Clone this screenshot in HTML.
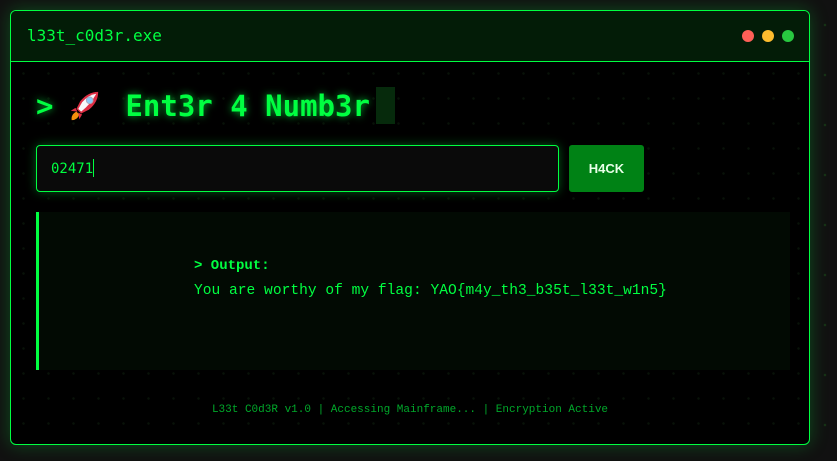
<!DOCTYPE html>
<html><head><meta charset="utf-8"><style>
*{margin:0;padding:0;box-sizing:border-box}
html,body{width:837px;height:461px;overflow:hidden}
body{background:#111 radial-gradient(circle,#163016 1.1px,transparent 1.5px) 0 0/50px 50px;font-family:"DejaVu Sans Mono","Liberation Mono",monospace;position:relative}
.win{position:absolute;left:10px;top:10px;width:800px;height:435px;border:1px solid #00ff41;border-radius:6px;background:#000 radial-gradient(circle,#081208 1px,transparent 1.5px) 0 0/25px 25px;box-shadow:0 0 18px rgba(0,255,65,.25);overflow:hidden}
.hdr{height:51px;background:#031c07;border-bottom:1.5px solid #00ff41;position:relative}
.hdr .t{position:absolute;left:16px;top:15px;color:#00ff41;font-size:16px}
.dots{position:absolute;right:15px;top:19px;display:flex;gap:8px}
.dots i{width:12px;height:12px;border-radius:50%;display:block}
h1{position:absolute;left:25px;top:76px;font-size:29px;font-weight:bold;color:#00ff41;text-shadow:0 0 8px rgba(0,255,65,.7);white-space:pre;display:flex;align-items:center}
.cur{display:inline-block;width:19px;height:37px;background:#062a0c;margin-left:6px}
.inp{position:absolute;left:25px;top:134px;width:523px;height:47px;border:1px solid #00ff41;border-radius:4px;background:#0a0a0a;box-shadow:0 0 10px rgba(0,255,65,.35);color:#00ff41;font-size:14px;padding:13px 0 0 14px}
.inp span{display:inline-block;width:1px;height:18px;background:#00ff41;vertical-align:-4px}
.btn{position:absolute;left:558px;top:134px;width:75px;height:47px;background:#008215;border-radius:3px;color:#e8ffe8;font-family:"Liberation Sans",sans-serif;font-weight:bold;font-size:13px;text-align:center;line-height:47px}
.out{position:absolute;left:25px;top:201px;width:754px;height:158px;background:#020a03;border-left:3px solid #00ff41}
.out .l{position:absolute;left:155px;top:46px;color:#00ff41;font-size:14px;font-weight:bold;font-family:"Liberation Mono",monospace}
.out .m{position:absolute;left:155px;top:71px;color:#00ff41;font-size:14.6px;font-family:"Liberation Mono",monospace;white-space:pre}
.ft{position:absolute;left:0;width:100%;top:393px;text-align:center;color:#00a82a;font-size:11px;font-family:"Liberation Mono",monospace;white-space:pre}
</style></head><body>
<div class="win">
<div class="hdr"><div class="t">l33t_c0d3r.exe</div>
<div class="dots"><i style="background:#ff5f57"></i><i style="background:#febc2e"></i><i style="background:#28c840"></i></div></div>
<h1>&gt;<svg width="34" height="34" viewBox="0 0 36 36" style="margin:0 24px 0 14px"><path d="M10 24 Q4 27 5 33 Q11 33 13 27Z" fill="#f4900c"/><path d="M9 20 L4 23 L11 24Z M16 27 L13 32 L12 25Z" fill="#dd2e44"/><path d="M33 3 Q22 3 14 13 L10 21 L15 26 L23 22 Q33 14 33 3Z" fill="#dd2e44"/><path d="M31 5 Q23 6 16 14 L12 21 L15 24 Q25 16 31 5Z" fill="#f5f8fa"/><circle cx="24" cy="12" r="3.5" fill="#88c9f9" stroke="#aab" stroke-width="1"/></svg>Ent3r 4 Numb3r<span class="cur"></span></h1>
<div class="inp">02471<span></span></div>
<div class="btn">H4CK</div>
<div class="out"><div class="l">&gt; Output:</div><div class="m">You are worthy of my flag: YAO{m4y_th3_b35t_l33t_w1n5}</div></div>
<div class="ft">L33t C0d3R v1.0 | Accessing Mainframe... | Encryption Active</div>
</div>
</body></html>
